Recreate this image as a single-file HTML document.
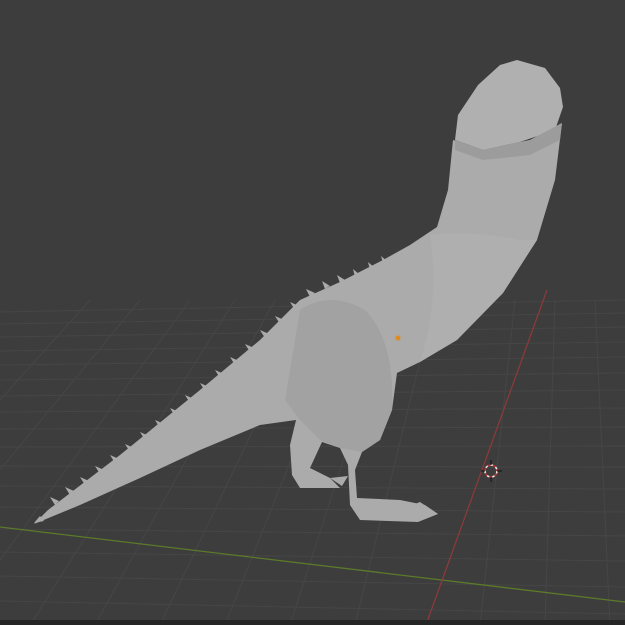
<!DOCTYPE html>
<html><head><meta charset="utf-8"><style>
html,body{margin:0;padding:0;background:#3d3d3d;}
svg{display:block}
</style></head><body>
<svg width="625" height="625" viewBox="0 0 625 625" xmlns="http://www.w3.org/2000/svg">
<rect width="625" height="625" fill="#3d3d3d"/>
<g stroke="#464646" stroke-width="1" fill="none">
<line x1="0" y1="312" x2="625" y2="300"/>
<line x1="0" y1="324" x2="625" y2="313"/>
<line x1="0" y1="337" x2="625" y2="327"/>
<line x1="0" y1="351" x2="625" y2="342"/>
<line x1="0" y1="365" x2="625" y2="357"/>
<line x1="0" y1="380" x2="625" y2="373"/>
<line x1="0" y1="396" x2="625" y2="390"/>
<line x1="0" y1="412" x2="625" y2="408"/>
<line x1="0" y1="429" x2="625" y2="427"/>
<line x1="0" y1="447" x2="625" y2="446"/>
<line x1="0" y1="466" x2="625" y2="467"/>
<line x1="0" y1="486" x2="625" y2="489"/>
<line x1="0" y1="507" x2="625" y2="512"/>
<line x1="0" y1="529" x2="625" y2="536"/>
<line x1="0" y1="552" x2="625" y2="561"/>
<line x1="0" y1="576" x2="625" y2="587"/>
<line x1="0" y1="601" x2="625" y2="614"/>
<line x1="0" y1="470" x2="140" y2="300"/>
<line x1="0" y1="560" x2="190" y2="300"/>
<line x1="30" y1="625" x2="235" y2="300"/>
<line x1="95" y1="625" x2="275" y2="300"/>
<line x1="160" y1="625" x2="315" y2="300"/>
<line x1="225" y1="625" x2="355" y2="300"/>
<line x1="290" y1="625" x2="395" y2="300"/>
<line x1="355" y1="625" x2="435" y2="300"/>
<line x1="480" y1="625" x2="515" y2="300"/>
<line x1="545" y1="625" x2="555" y2="300"/>
<line x1="610" y1="625" x2="595" y2="300"/>
<line x1="0" y1="400" x2="90" y2="300"/>
</g>
<line x1="0" y1="527" x2="625" y2="602" stroke="#5c7a2a" stroke-width="1.3"/>
<line x1="427" y1="622" x2="547" y2="290" stroke="#8a3a3a" stroke-width="1.3"/>
<rect x="0" y="620" width="625" height="5" fill="#262626"/>
<g fill="#ababab">
<path d="M34,524 L48,510 L120,455 L200,390 L260,340 L300,300 L340,282 L383,260 L410,245 L437,227 L448,190 L453,140 L483,150 L530,140 L562,123 L555,180 L537,240 L503,293 L457,340 L420,362 L397,373 L392,410 L380,440 L362,452 L355,470 L357,498 L400,500 L425,505 L438,514 L418,522 L360,520 L350,505 L348,465 L340,448 L322,442 L310,468 L330,478 L340,488 L300,488 L292,475 L290,445 L296,420 L260,425 L200,450 L140,478 L80,505 Z"/>
<path d="M455,140 L458,115 L478,85 L500,65 L517,60 L545,68 L560,88 L563,107 L555,130 L520,142 L483,150 Z" fill="#b0b0b0"/>
<path d="M455,140 L483,150 L530,140 L562,123 L560,140 L530,155 L483,160 L455,150Z" fill="#9c9c9c"/>
<path d="M300,310 Q330,290 365,310 Q395,340 392,410 L380,440 L362,452 L340,448 L320,440 L300,420 L285,400 Z" fill="#a2a2a2"/>
<path d="M430,235 Q470,230 520,240 L537,240 L503,293 L457,340 L420,362 Q440,300 430,235Z" fill="#b2b2b2" opacity="0.6"/>
</g>
<g fill="#ababab">
<path d="M40,516 l-6,7 l10,-2 z M55,505 l-5,-8 l9,4 z M70,495 l-5,-8 l9,4 z M85,485 l-5,-8 l9,4 z M100,474 l-5,-8 l9,4 z M115,463 l-5,-8 l9,4 z M130,452 l-5,-8 l9,4 z M145,440 l-5,-8 l9,4 z M160,428 l-5,-8 l9,4 z M175,416 l-5,-8 l9,4 z M190,403 l-5,-8 l9,4 z M205,391 l-5,-8 l9,4 z M220,378 l-5,-8 l9,4 z M235,365 l-5,-8 l9,4 z M250,352 l-5,-8 l9,4 z M265,338 l-5,-8 l9,4 z M280,324 l-5,-8 l9,4 z M295,310 l-5,-8 l9,4 z M310,297 l-4,-8 l9,4 z M325,289 l-3,-8 l8,5 z M340,283 l-3,-8 l8,5 z M355,277 l-2,-8 l7,6 z M370,270 l-2,-8 l7,6 z M383,263 l-2,-7 l7,6 z"/>
<path d="M400,510 l20,-8 l18,12 l-20,2z M330,478 l18,-2 l-6,10z"/>
</g>
<circle cx="398" cy="338" r="2.5" fill="#e08a20"/>
<g>
<circle cx="491" cy="471" r="6" fill="none" stroke="#e8e8e8" stroke-width="1.6" stroke-dasharray="3 2.5"/>
<circle cx="491" cy="471" r="6" fill="none" stroke="#c03030" stroke-width="1.6" stroke-dasharray="3 2.5" stroke-dashoffset="3"/>
<line x1="481" y1="471" x2="485" y2="471" stroke="#111"/>
<line x1="497" y1="471" x2="502" y2="471" stroke="#111"/>
<line x1="491" y1="460" x2="491" y2="465" stroke="#111"/>
<line x1="491" y1="477" x2="491" y2="482" stroke="#111"/>
</g>
</svg>
</body></html>
